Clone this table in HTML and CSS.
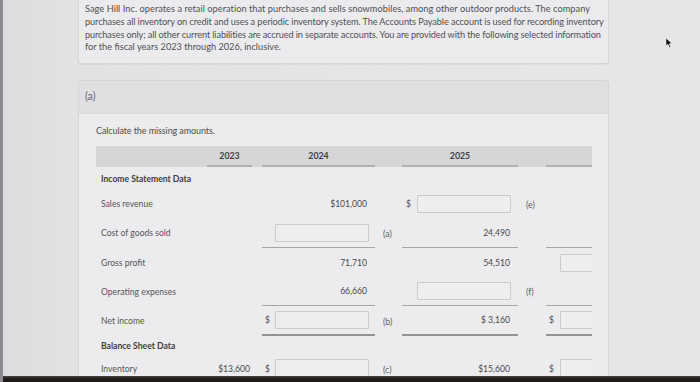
FILE: index.html
```html
<!DOCTYPE html>
<html lang="en">
<head>
<meta charset="utf-8">
<title>Sage Hill Inc.</title>
<link rel="stylesheet" href="styles.css">
</head>
<body>
<div class="screen">
  <div class="main">
    <div class="intro">
      <p><span class="ln l1">Sage Hill Inc. operates a retail operation that purchases and sells snowmobiles, among other outdoor products. The company</span> <span class="ln l2">purchases all inventory on credit and uses a periodic inventory system. The Accounts Payable account is used for recording inventory</span> <span class="ln l3">purchases only; all other current liabilities are accrued in separate accounts. You are provided with the following selected information</span> <span class="ln">for the fiscal years 2023 through 2026, inclusive.</span></p>
    </div>
    <div class="part">
      <div class="part-head">(a)</div>
      <div class="part-body">
        <p class="prompt">Calculate the missing amounts.</p>
        <div class="tablewrap">
          <div class="row head">
            <div class="c lbl"></div>
            <div class="c y23 hd">2023</div>
            <div class="c sp"></div>
            <div class="c m24 hd">2024</div>
            <div class="c let"></div>
            <div class="c m25 hd">2025</div>
            <div class="c let"></div>
            <div class="c m26 hd"></div>
          </div>
          <div class="row sec">
            <div class="c lbl b">Income Statement Data</div>
          </div>
          <div class="row r-sr">
            <div class="c lbl">Sales revenue</div>
            <div class="c y23"></div>
            <div class="c sp"></div>
            <div class="c m24 val">$101,000</div>
            <div class="c let"></div>
            <div class="c m25"><span class="dol">$</span><span class="inp"></span></div>
            <div class="c let">(e)</div>
            <div class="c m26"></div>
          </div>
          <div class="row r-tall">
            <div class="c lbl">Cost of goods sold</div>
            <div class="c y23"></div>
            <div class="c sp"></div>
            <div class="c m24 ul"><span class="dol"></span><span class="inp"></span></div>
            <div class="c let">(a)</div>
            <div class="c m25 ul val">24,490</div>
            <div class="c let"></div>
            <div class="c m26 ul"></div>
          </div>
          <div class="row">
            <div class="c lbl">Gross profit</div>
            <div class="c y23"></div>
            <div class="c sp"></div>
            <div class="c m24 val">71,710</div>
            <div class="c let"></div>
            <div class="c m25 val">54,510</div>
            <div class="c let"></div>
            <div class="c m26"><span class="dol"></span><span class="inp"></span></div>
          </div>
          <div class="row">
            <div class="c lbl">Operating expenses</div>
            <div class="c y23"></div>
            <div class="c sp"></div>
            <div class="c m24 ul val">66,660</div>
            <div class="c let"></div>
            <div class="c m25 ul"><span class="dol"></span><span class="inp"></span></div>
            <div class="c let">(f)</div>
            <div class="c m26 ul"></div>
          </div>
          <div class="row r-tall">
            <div class="c lbl">Net income</div>
            <div class="c y23"></div>
            <div class="c sp"></div>
            <div class="c m24 ul2"><span class="dol">$</span><span class="inp"></span></div>
            <div class="c let">(b)</div>
            <div class="c m25 ul2 val">$ 3,160</div>
            <div class="c let"></div>
            <div class="c m26 ul2"><span class="dol">$</span><span class="inp"></span></div>
          </div>
          <div class="row sec sec2">
            <div class="c lbl b">Balance Sheet Data</div>
          </div>
          <div class="row r-last">
            <div class="c lbl">Inventory</div>
            <div class="c y23 val">$13,600</div>
            <div class="c sp"></div>
            <div class="c m24"><span class="dol">$</span><span class="inp"></span></div>
            <div class="c let">(c)</div>
            <div class="c m25 val">$15,600</div>
            <div class="c let"></div>
            <div class="c m26"><span class="dol">$</span><span class="inp"></span></div>
          </div>
        </div>
      </div>
    </div>
  </div>
</div>
<svg class="cursor" width="8" height="12" viewBox="0 0 8 12"><path d="M1 1 L1 9 L3 7.2 L4.6 10.6 L5.8 10 L4.3 6.8 L7 6.6 Z" fill="#111" stroke="#f4f4f4" stroke-width="0.6"/></svg>
<div class="bezel"></div>
</body>
</html>
```
FILE: styles.css
```css
* { box-sizing: border-box; }
html, body { margin: 0; padding: 0; }
body {
  width: 700px;
  height: 382px;
  overflow: hidden;
  position: relative;
  background: linear-gradient(90deg, #dcdcde 0%, #e2e2e4 10%, #e6e6e8 60%, #e7e5e7 100%);
  font-family: Lato, "Open Sans", sans-serif;
  color: #4c4c50;
  border-left: 3px solid #8a8a8e;
}
.screen {
  padding-left: 75px;
  display: flex;
}
.main {
  width: 531px;
  display: flex;
  flex-direction: column;
  gap: 16px;
}
.intro {
  background: #ebebed;
  border: 1px solid #d6d6d8;
  border-top: none;
  border-radius: 0 0 3px 3px;
  padding: 3px 0 9px 6px;
  box-shadow: 0 1px 1px rgba(0,0,0,0.05);
}
.intro p {
  margin: 0;
  font-size: 9.2px;
  line-height: 12.8px;
  color: #505056;
}
.ln { display: block; white-space: nowrap; }
.l1 { letter-spacing: 0.05px; }
.l2 { letter-spacing: -0.1px; }
.l3 { letter-spacing: -0.12px; }
.part {
  border: 1px solid #d6d6d8;
  border-radius: 3px 3px 0 0;
  background: #ececee;
  flex: 1;
}
.part-head {
  height: 33px;
  background: #e0e0e2;
  border-bottom: 1px solid #d8d8da;
  padding: 9px 0 0 6px;
  font-size: 10.5px;
  color: #646478;
}
.part-body {
  padding: 11px 16px 0 17px;
}
.prompt {
  margin: 0 0 10px 0;
  font-size: 9px;
  color: #4e4e52;
  letter-spacing: -0.1px;
}
.tablewrap {
  width: 496px;
  overflow: hidden;
}
.row {
  display: grid;
  grid-template-columns: 111px 45px 10px 113px 27px 116px 28px 113px;
  width: 563px;
  height: 29px;
  align-items: center;
}
.row.head {
  height: 21px;
  background: #d6d6d8;
  align-items: stretch;
}
.row.sec { height: 23px; }
.row.sec2 { height: 20px; }
.row.r-sr { height: 28px; }
.row.r-tall { height: 30px; }
.row.r-last { height: 26px; }
.c {
  font-size: 8.6px;
  height: 100%;
  display: flex;
  align-items: center;
  white-space: nowrap;
}
.lbl { padding-left: 5px; color: #55555a; }
.lbl.b { font-weight: 700; color: #3c3c40; }
.hd {
  justify-content: center;
  font-weight: 700;
  color: #3e3e42;
  font-size: 8.8px;
  border-bottom: 2px solid #b0b0b3;
}
.val { justify-content: flex-end; padding-right: 8px; color: #48484c; }
.y23.val { padding-right: 2px; }
.let { padding-left: 8px; color: #5e5e64; font-size: 8.8px; }
.dol { display: inline-block; width: 13px; padding-left: 3px; color: #4e4e52; }
.m25 .dol { width: 15px; padding-left: 4px; }
.m26 .dol { width: 14px; padding-left: 3px; }
.inp {
  display: inline-block;
  width: 94px;
  height: 18px;
  border: 1px solid #cbcbce;
  background: #eeeef0;
  border-radius: 1px;
}
.r-last .inp { align-self: flex-start; margin-top: 3px; }
.r-last .dol { align-self: center; }
.ul { border-bottom: 1.5px solid #a6a6a9; }
.ul2 { border-bottom: 2px solid #939396; }
.cursor {
  position: absolute;
  left: 662px;
  top: 37px;
}
.bezel {
  position: absolute;
  left: -3px;
  right: 0;
  bottom: 0;
  height: 6px;
  background: linear-gradient(180deg, #4a4644 0%, #23201f 40%, #191716 100%);
}
```
